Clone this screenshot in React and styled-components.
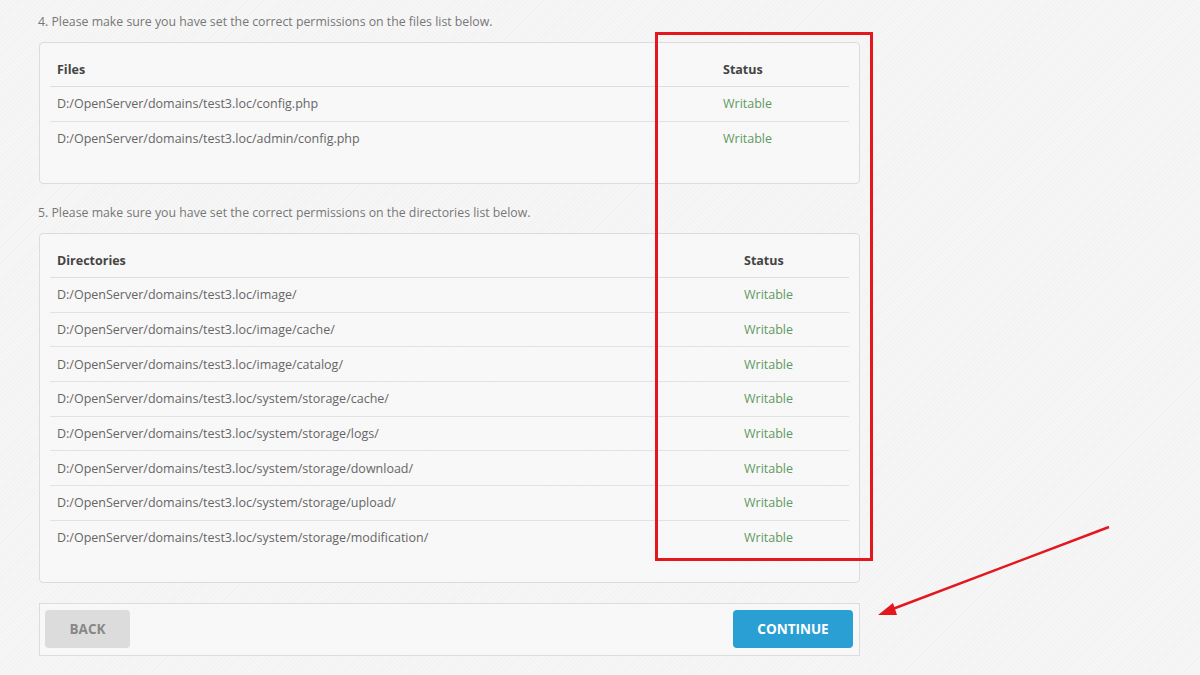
import React from 'react'
import styled, { createGlobalStyle } from 'styled-components'

const GlobalStyle = createGlobalStyle`
  html, body {
    margin: 0;
    padding: 0;
    background-color: #f5f5f5;
    background-image: repeating-linear-gradient(
      -45deg,
      #f6f6f6 0px,
      #f6f6f6 2px,
      #f2f2f2 2px,
      #f2f2f2 3px
    );
    font-family: "Open Sans", "Liberation Sans", sans-serif;
    color: #666;
  }
  #root { min-height: 675px; }
`

const files = [
  'D:/OpenServer/domains/test3.loc/config.php',
  'D:/OpenServer/domains/test3.loc/admin/config.php',
]

const dirs = [
  'D:/OpenServer/domains/test3.loc/image/',
  'D:/OpenServer/domains/test3.loc/image/cache/',
  'D:/OpenServer/domains/test3.loc/image/catalog/',
  'D:/OpenServer/domains/test3.loc/system/storage/cache/',
  'D:/OpenServer/domains/test3.loc/system/storage/logs/',
  'D:/OpenServer/domains/test3.loc/system/storage/download/',
  'D:/OpenServer/domains/test3.loc/system/storage/upload/',
  'D:/OpenServer/domains/test3.loc/system/storage/modification/',
]

const PermTable = ({ title, items, statusWidth }) => (
  <Panel>
    <Table>
      <thead>
        <tr>
          <Th>{title}</Th>
          <Th $width={statusWidth}>Status</Th>
        </tr>
      </thead>
      <tbody>
        {items.map((path) => (
          <tr key={path}>
            <Td>{path}</Td>
            <Td $ok>Writable</Td>
          </tr>
        ))}
      </tbody>
    </Table>
  </Panel>
)

const App = () => {
  return (
    <Page>
      <GlobalStyle />
      <Step>4. Please make sure you have set the correct permissions on the files list below.</Step>
      <PermTable title="Files" items={files} statusWidth={133} />

      <Step $gap>5. Please make sure you have set the correct permissions on the directories list below.</Step>
      <PermTable title="Directories" items={dirs} statusWidth={112} />

      <Footer>
        <Button>BACK</Button>
        <Button $primary>CONTINUE</Button>
      </Footer>

      {/* annotations drawn over the screenshot */}
      <Highlight />
      <Arrow width="240" height="100" viewBox="0 0 240 100">
        <line x1="233" y1="2" x2="14" y2="85" stroke="#e3171d" strokeWidth="2.5" />
        <polygon points="2,90 17,78 21,90" fill="#e3171d" />
      </Arrow>
    </Page>
  )
}

export default App

const Page = styled.div`
  position: relative;
  width: 821px;
  padding: 13px 0 20px 39px;
`

const Step = styled.p`
  margin: ${(p) => (p.$gap ? '20px' : '0')} 0 11px -1px;
  font-size: 12.3px;
  line-height: 18px;
  color: #777;
`

const Panel = styled.div`
  border: 1px solid #dcdcdc;
  border-radius: 4px;
  background: rgba(250, 250, 250, 0.6);
  padding: 10px 10px 0;
`

const Table = styled.table`
  width: 100%;
  border-collapse: collapse;
  margin-bottom: 27px;
`

const Th = styled.th`
  text-align: left;
  font-size: 12.5px;
  font-weight: 700;
  color: #444;
  padding: 8px 7px;
  line-height: 17px;
  height: 33px;
  box-sizing: border-box;
  border-bottom: 1px solid #dedede;
  width: ${(p) => (p.$width ? `${p.$width}px` : 'auto')};
`

const Td = styled.td`
  font-size: 12.5px;
  line-height: 17px;
  padding: 8px 7px;
  height: 34.7px;
  box-sizing: border-box;
  color: ${(p) => (p.$ok ? '#5f9a5f' : '#666')};
  border-bottom: 1px solid #e2e2e2;

  tr:last-child > & {
    border-bottom: none;
  }
`

const Footer = styled.div`
  margin-top: 20px;
  border: 1px solid #dcdcdc;
  background: rgba(250, 250, 250, 0.6);
  padding: 6px 6px 7px 5px;
  display: flex;
  justify-content: space-between;
  align-items: center;
`

const Button = styled.button`
  height: 38px;
  width: ${(p) => (p.$primary ? '120px' : '85px')};
  border: none;
  border-radius: 4px;
  font-family: "Open Sans", "Liberation Sans", sans-serif;
  font-size: 13.5px;
  font-weight: 700;
  background: ${(p) => (p.$primary ? '#2a9fd4' : '#dcdcdc')};
  color: ${(p) => (p.$primary ? '#fff' : '#888')};
  cursor: pointer;
`

const Highlight = styled.div`
  position: absolute;
  left: 655px;
  top: 32px;
  width: 218px;
  height: 529px;
  box-sizing: border-box;
  border: 3px solid #e3171d;
  pointer-events: none;
`

const Arrow = styled.svg`
  position: absolute;
  left: 876px;
  top: 525px;
  overflow: visible;
  pointer-events: none;
`
